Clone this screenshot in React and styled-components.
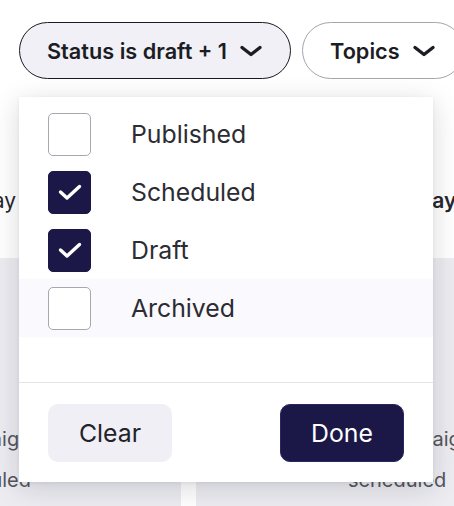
import React from 'react';
import styled, { createGlobalStyle, css } from 'styled-components';

const GlobalStyle = createGlobalStyle`
  html, body {
    margin: 0;
    padding: 0;
    background: #ffffff;
  }
  body {
    font-family: Inter, "Noto Sans", "Liberation Sans", sans-serif;
  }
`;

const statuses = [
  { label: 'Published', checked: false },
  { label: 'Scheduled', checked: true },
  { label: 'Draft', checked: true },
  { label: 'Archived', checked: false, hovered: true },
];

const Chevron = () => (
  <svg width="24" height="12" viewBox="0 0 24 12" fill="none">
    <path d="M3 2.5 L12 9.5 L21 2.5" stroke="#1c1c24" strokeWidth="3.4" strokeLinecap="round" strokeLinejoin="round" />
  </svg>
);

const Check = () => (
  <svg width="24" height="17" viewBox="0 0 24 17" fill="none">
    <path d="M2.5 8 L9 14 L21.5 2.5" stroke="#ffffff" strokeWidth="3.4" strokeLinecap="round" strokeLinejoin="round" />
  </svg>
);

export default function App() {
  return (
    <>
      <GlobalStyle />
      <Page>
        <FilterBar>
          <Chip active>
            Status is draft + 1
            <Chevron />
          </Chip>
          <Chip>
            Topics
            <Chevron />
          </Chip>
        </FilterBar>

        <Board>
          <Column side="left">
            <DayHeading>Monday</DayHeading>
            <Card side="left">
              <CardText>Summer campaign</CardText>
              <CardText>is scheduled</CardText>
            </Card>
          </Column>
          <Column side="right">
            <DayHeading bold>Tuesday</DayHeading>
            <Card side="right">
              <CardText>Ad campaign</CardText>
              <CardText>scheduled</CardText>
            </Card>
          </Column>
        </Board>

        <Menu>
          <OptionList>
            {statuses.map(item => (
              <OptionRow key={item.label} hovered={item.hovered}>
                <Box checked={item.checked}>{item.checked && <Check />}</Box>
                <OptionLabel>{item.label}</OptionLabel>
              </OptionRow>
            ))}
          </OptionList>
          <MenuFooter>
            <Button>Clear</Button>
            <Button primary>Done</Button>
          </MenuFooter>
        </Menu>
      </Page>
    </>
  );
}

const Page = styled.div`
  position: relative;
  width: 454px;
  height: 506px;
  overflow: hidden;
  background: #ffffff;
`;

const FilterBar = styled.div`
  display: flex;
  gap: 11px;
  padding: 22px 0 0 19px;
  white-space: nowrap;
`;

const Chip = styled.button`
  display: flex;
  align-items: center;
  gap: 12px;
  flex-shrink: 0;
  height: 57px;
  padding: 0 27px 0 27px;
  border-radius: 29px;
  font-family: inherit;
  font-size: 21.7px;
  font-weight: 600;
  color: #1c1c24;
  background: #ffffff;
  border: 1px solid #a5a5ad;

  ${props =>
    props.active &&
    css`
      background: #f0f0f6;
      border-color: #1a1a22;
    `}
`;

const Board = styled.div`
  display: grid;
  grid-template-columns: 181px 1fr;
  gap: 15px;
  margin-top: 109px;
`;

const Column = styled.div`
  display: flex;
  flex-direction: column;
  gap: 45px;
  align-items: stretch;

  h3 {
    justify-content: ${props => (props.side === 'left' ? 'flex-end' : 'flex-start')};
    padding: ${props => (props.side === 'left' ? '0 165px 0 0' : '0 0 0 174px')};
  }
`;

const DayHeading = styled.h3`
  display: flex;
  margin: 0;
  font-size: 21px;
  line-height: 25px;
  font-weight: ${props => (props.bold ? 600 : 400)};
  color: #26262c;
  white-space: nowrap;
`;

const Card = styled.div`
  display: flex;
  flex-direction: column;
  gap: 19px;
  align-items: ${props => (props.side === 'left' ? 'flex-end' : 'flex-start')};
  height: 260px;
  padding: ${props => (props.side === 'left' ? '170px 150px 0 0' : '170px 0 0 152px')};
  background: #ececf1;
`;

const CardText = styled.div`
  font-size: 20px;
  line-height: 22px;
  color: #55555c;
  white-space: nowrap;
`;

const Menu = styled.div`
  position: absolute;
  left: 19px;
  top: 97px;
  width: 414px;
  background: #ffffff;
  box-shadow: 0 6px 26px rgba(20, 20, 40, 0.16), 0 1px 4px rgba(20, 20, 40, 0.06);
`;

const OptionList = styled.div`
  display: flex;
  flex-direction: column;
  padding: 8px 0 45px;
  border-bottom: 1px solid #e3e3ec;
`;

const OptionRow = styled.label`
  display: flex;
  align-items: center;
  gap: 40px;
  height: 58px;
  padding-left: 29px;
  background: ${props => (props.hovered ? '#f9f9fe' : 'transparent')};
`;

const Box = styled.span`
  display: flex;
  align-items: center;
  justify-content: center;
  box-sizing: border-box;
  width: 43px;
  height: 43px;
  border-radius: 5px;
  border: 1px solid #a7a7b0;
  background: #ffffff;

  ${props =>
    props.checked &&
    css`
      background: #1b1848;
      border-color: #1b1848;
    `}
`;

const OptionLabel = styled.span`
  font-size: 24.8px;
  color: #2c2c33;
`;

const MenuFooter = styled.div`
  display: flex;
  justify-content: space-between;
  padding: 21px 29px 20px;
`;

const Button = styled.button`
  width: 124px;
  height: 58px;
  border: none;
  border-radius: 10px;
  font-family: inherit;
  font-size: 24.8px;
  color: #222228;
  background: #efeff5;

  ${props =>
    props.primary &&
    css`
      color: #ffffff;
      background: #1b1848;
      border: 1px solid #2a2760;
    `}
`;
